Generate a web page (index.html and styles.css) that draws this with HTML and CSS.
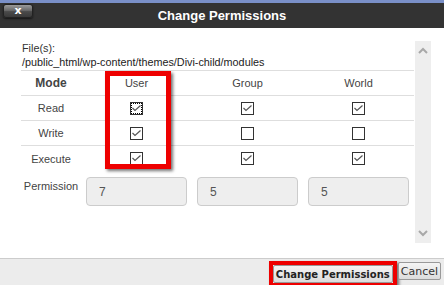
FILE: index.html
```html
<!DOCTYPE html>
<html lang="en">
<head>
  <meta charset="UTF-8" />
  <meta name="viewport" content="width=device-width, initial-scale=1.0"/>
  <title>Change Permissions</title>
  <link rel="stylesheet" href="styles.css">
</head>
<body>

  <div class="dialog">
    <div class="titlebar">
      <button class="close-btn">x</button>
      <span class="title">Change Permissions</span>
      <span></span>
    </div>

    <div class="body">
      <div class="main">
        <div class="files">
          <div>File(s):</div>
          <div class="path">/public_html/wp-content/themes/Divi-child/modules</div>
        </div>

        <div class="perm-table">
          <div class="row head">
            <span class="mode">Mode</span>
            <span>User</span>
            <span>Group</span>
            <span>World</span>
          </div>
          <div class="row">
            <span>Read</span>
            <span><i class="cb on focus"></i></span>
            <span><i class="cb on"></i></span>
            <span><i class="cb on"></i></span>
          </div>
          <div class="row">
            <span>Write</span>
            <span><i class="cb on"></i></span>
            <span><i class="cb"></i></span>
            <span><i class="cb"></i></span>
          </div>
          <div class="row last">
            <span>Execute</span>
            <span><i class="cb on"></i></span>
            <span><i class="cb on"></i></span>
            <span><i class="cb on"></i></span>
          </div>
          <div class="row perm">
            <span class="perm-label">Permission</span>
            <span><input class="num" type="text" value="7" readonly></span>
            <span><input class="num" type="text" value="5" readonly></span>
            <span><input class="num" type="text" value="5" readonly></span>
          </div>
          <div class="mark user-mark"></div>
        </div>
      </div>

      <div class="scrollbar">
        <svg width="16" height="16" viewBox="0 0 16 16"><path d="M4 10 L8 6 L12 10" fill="none" stroke="#a8a8a8" stroke-width="2"/></svg>
        <svg width="16" height="16" viewBox="0 0 16 16"><path d="M4 6 L8 10 L12 6" fill="none" stroke="#a8a8a8" stroke-width="2"/></svg>
      </div>
    </div>

    <div class="footer">
      <span class="mark-wrap">
        <button class="btn primary">Change Permissions</button>
      </span>
      <button class="btn">Cancel</button>
    </div>
  </div>

</body>
</html>
```

FILE: styles.css
```css
body {
  margin: 0;
  font-family: "Liberation Sans", Arial, sans-serif;
  background: #ffffff;
  color: #333;
  overflow: hidden;
}

.dialog {
  width: 444px;
  height: 285px;
  display: flex;
  flex-direction: column;
}

.titlebar {
  border-top: 3px solid #7a90c8;
  background: #333333;
  height: 25px;
  display: grid;
  grid-template-columns: 1fr auto 1fr;
  align-items: center;
}

.title {
  color: #ffffff;
  font-weight: bold;
  font-size: 13px;
}

.close-btn {
  justify-self: start;
  margin-left: 3px;
  margin-top: -9px;
  width: 30px;
  height: 14px;
  padding: 0;
  border: 1px solid #222;
  border-radius: 3px;
  background: linear-gradient(#9a9a9a, #6a6a6a 45%, #4a4a4a 55%, #3a3a3a);
  color: #fff;
  font-family: "DejaVu Sans", sans-serif;
  font-weight: bold;
  font-size: 11px;
  line-height: 10px;
  box-shadow: 0 1px 2px rgba(0,0,0,0.6);
}

.body {
  flex: 1;
  display: flex;
  padding: 13px 0 0 21px;
}

.main {
  width: 393px;
}

.files {
  font-size: 10.8px;
  line-height: 14px;
  color: #333;
  padding-left: 1px;
  border-bottom: 1px solid #dedede;
  padding-bottom: 1px;
}

.path {
  color: #222;
}

.perm-table {
  position: relative;
}

.row {
  display: grid;
  grid-template-columns: 60px 111px 111px 111px;
  height: 24px;
  border-bottom: 1px solid #dedede;
  align-items: center;
  font-size: 11px;
  color: #444;
}

.row span {
  display: flex;
  justify-content: center;
  align-items: center;
}

.row.last {
  border-bottom: none;
  height: 25px;
}

.row .mode {
  font-weight: bold;
  font-size: 12px;
}

.row.perm {
  border-bottom: none;
  height: auto;
  padding-top: 6px;
  align-items: start;
}

.perm-label {
  padding-top: 3px;
}

.num {
  box-sizing: border-box;
  width: 101px;
  height: 29px;
  margin: 0;
  border: 1px solid #cccccc;
  border-radius: 4px;
  background: #eeeeee;
  color: #555;
  font-family: "Liberation Sans", Arial, sans-serif;
  font-size: 12px;
  padding: 0 12px;
}

.cb {
  box-sizing: border-box;
  width: 13px;
  height: 13px;
  border: 1px solid #333;
  background: #fff;
  display: block;
}

.cb.on {
  background: #fff url("data:image/svg+xml;utf8,<svg xmlns='http://www.w3.org/2000/svg' width='11' height='11' viewBox='0 0 11 11'><path d='M1.5 5 L4 7.5 L9.5 2.5' fill='none' stroke='%23555' stroke-width='1.2'/></svg>") no-repeat center;
}

.cb.focus {
  outline: 1px dotted #000;
  outline-offset: -2px;
}

.mark {
  position: absolute;
  border: 5px solid #ee0000;
  box-shadow: 2px 2px 3px rgba(0,0,0,0.55);
}

.user-mark {
  left: 84px;
  top: 0;
  width: 56px;
  height: 88px;
}

.scrollbar {
  margin: 0 0 0 1px;
  width: 16px;
  height: 202px;
  background: #eeeeee;
  display: flex;
  flex-direction: column;
  justify-content: space-between;
  padding: 2px 0;
  box-sizing: border-box;
}

.footer {
  height: 27px;
  border-top: 1px solid #cccccc;
  background: #ececec;
  display: flex;
  justify-content: flex-end;
  align-items: flex-start;
  padding: 3px 3px 0 0;
  gap: 1px;
  box-sizing: border-box;
  overflow: hidden;
}

.mark-wrap {
  border: 4px solid #ee0000;
  box-shadow: 2px 2px 3px rgba(0,0,0,0.55);
  margin-top: -1px;
  display: flex;
}

.btn {
  font-family: "DejaVu Sans", Verdana, sans-serif;
  font-size: 11px;
  height: 18px;
  padding: 0 2px;
  border: 1px solid #999;
  border-radius: 2px;
  background: linear-gradient(#f4f4f4, #dcdcdc);
  color: #333;
}

.btn.primary {
  font-weight: bold;
  font-size: 10px;
  color: #222;
}
```
